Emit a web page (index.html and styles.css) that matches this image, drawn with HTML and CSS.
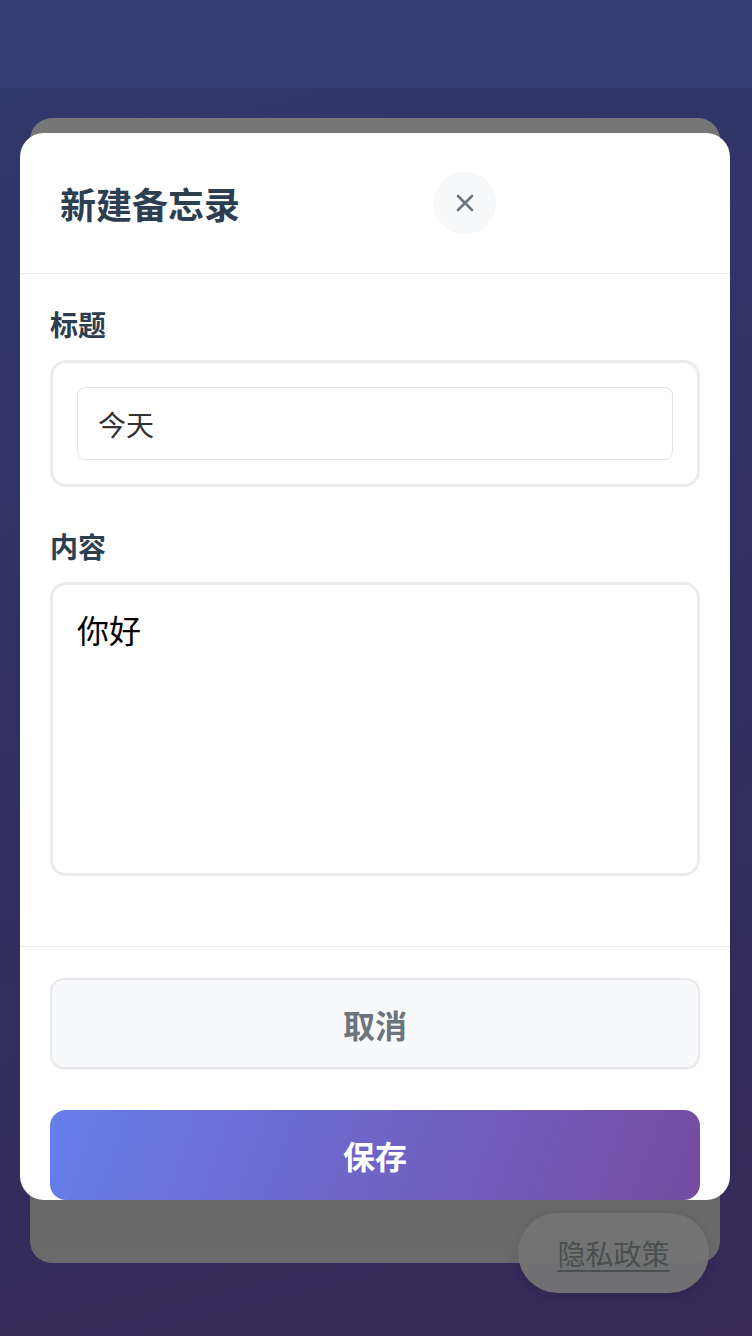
FILE: index.html
```html
<!DOCTYPE html>
<html lang="zh-CN">
<head>
<meta charset="utf-8">
<title>新建备忘录</title>
<link rel="stylesheet" href="styles.css">
</head>
<body>
<div class="page">
  <div class="top-band"></div>
  <div class="back-card"></div>

  <div class="modal">
    <div class="modal-header">
      <h2 class="modal-title">新建备忘录</h2>
      <button class="close-btn" type="button" aria-label="关闭">
        <svg width="20" height="20" viewBox="0 0 20 20">
          <path d="M3 3 L17 17 M17 3 L3 17" stroke="#6c757d" stroke-width="2.6" stroke-linecap="round" fill="none"/>
        </svg>
      </button>
    </div>

    <div class="modal-body">
      <div class="form-group">
        <label class="form-label">标题</label>
        <div class="field-box">
          <input class="title-input" type="text" value="今天">
        </div>
      </div>
      <div class="form-group last">
        <label class="form-label">内容</label>
        <textarea class="content-input">你好</textarea>
      </div>
    </div>

    <div class="modal-footer">
      <button class="btn btn-cancel" type="button">取消</button>
      <button class="btn btn-save" type="button">保存</button>
    </div>
  </div>

  <a class="privacy-pill" href="#">隐私政策</a>
</div>
</body>
</html>
```

FILE: styles.css
```css
* {
  box-sizing: border-box;
}

html, body {
  margin: 0;
  padding: 0;
}

body {
  width: 752px;
  height: 1336px;
  overflow: hidden;
  font-family: "Noto Sans CJK SC", "Noto Sans", sans-serif;
}

.page {
  position: relative;
  width: 752px;
  height: 1336px;
  background: linear-gradient(165deg, #31396c 0%, #302f60 55%, #372a58 100%);
  display: flex;
  flex-direction: column;
}

.top-band {
  height: 88px;
  flex-shrink: 0;
  background: linear-gradient(90deg, #353f77 0%, #354078 100%);
}

.back-card {
  margin: 30px 0 0 30px;
  width: 690px;
  height: 1145px;
  border-radius: 22px;
  background: linear-gradient(180deg, #777777 0%, #656565 92%, #6b6b6b 100%);
}

.modal {
  position: absolute;
  top: 133px;
  left: 20px;
  width: 710px;
  height: 1067px;
  background: #ffffff;
  border-radius: 24px;
  overflow: hidden;
  display: flex;
  flex-direction: column;
}

.modal-header {
  height: 141px;
  flex-shrink: 0;
  padding: 0 40px;
  display: flex;
  align-items: center;
  gap: 195px;
  border-bottom: 1px solid #e9ecef;
}

.modal-title {
  margin: 0;
  font-size: 36px;
  font-weight: 700;
  color: #2c3e50;
  line-height: 1.3;
}

.close-btn {
  width: 60px;
  height: 60px;
  border: none;
  border-radius: 50%;
  background: #f8f9fa;
  box-shadow: 0 0 0 1px rgba(0, 0, 0, 0.04);
  display: flex;
  align-items: center;
  justify-content: center;
  padding: 0;
}

.modal-body {
  padding: 31px 30px 0;
  height: 673px;
  flex-shrink: 0;
  border-bottom: 1px solid #e9ecef;
}

.form-group {
  display: flex;
  flex-direction: column;
  margin-bottom: 40px;
}

.form-label {
  font-size: 28px;
  font-weight: 700;
  color: #2c3e50;
  line-height: 1.4;
  margin-bottom: 16px;
}

.field-box {
  border: 3px solid #e9ecef;
  border-radius: 16px;
  padding: 24px;
}

.title-input {
  display: block;
  width: 100%;
  height: 73px;
  border: 1px solid #e2e4e6;
  border-radius: 8px;
  padding: 0 20px;
  font-family: inherit;
  font-size: 28px;
  color: #333333;
  background: #ffffff;
  outline: none;
}

.content-input {
  display: block;
  width: 100%;
  height: 294px;
  border: 3px solid #e9ecef;
  border-radius: 16px;
  padding: 24px;
  font-family: inherit;
  font-size: 32px;
  line-height: 1.25;
  color: #000000;
  background: #ffffff;
  resize: none;
  outline: none;
}

.modal-footer {
  padding: 31px 30px 0;
  display: flex;
  flex-direction: column;
  gap: 41px;
}

.btn {
  width: 100%;
  font-family: inherit;
  font-size: 32px;
  font-weight: 700;
  border-radius: 14px;
  display: flex;
  align-items: center;
  justify-content: center;
  padding: 0;
}

.btn-cancel {
  height: 91px;
  background: #f8f9fa;
  border: 2px solid #e6e8eb;
  box-shadow: 0 1px 1px rgba(0, 0, 0, 0.05);
  color: #6c757d;
}

.btn-save {
  height: 90px;
  border: none;
  border-radius: 16px;
  background: linear-gradient(110deg, #667eea 0%, #764ba2 100%);
  color: #ffffff;
}

.privacy-pill {
  position: absolute;
  top: 1213px;
  left: 518px;
  width: 191px;
  height: 80px;
  border-radius: 40px;
  background: rgba(116, 116, 116, 0.93);
  box-shadow: 0 4px 12px rgba(0, 0, 0, 0.12);
  display: flex;
  align-items: center;
  justify-content: center;
  font-size: 28px;
  color: #4a5050;
  text-decoration: underline;
  text-underline-offset: 5px;
  text-decoration-thickness: 1.5px;
}
```
